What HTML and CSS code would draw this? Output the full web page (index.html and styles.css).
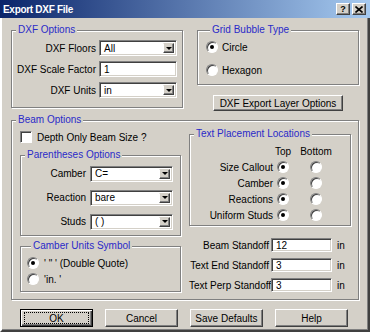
FILE: index.html
```html
<!DOCTYPE html>
<html lang="en">
<head>
<meta charset="UTF-8">
<title>Export DXF File</title>
<link rel="stylesheet" href="styles.css">
</head>
<body>

<div class="dialog">
    <div class="titlebar">
        <span class="title">Export DXF File</span>
        <div class="tb-buttons">
            <span class="tb-btn">?</span>
            <span class="tb-btn"><svg width="8" height="7" viewBox="0 0 8 7"><path d="M0.5 0.5 L7.5 6.5 M7.5 0.5 L0.5 6.5" stroke="#000" stroke-width="1.6"/></svg></span>
        </div>
    </div>

    <div class="client">
        <div class="top-row">
            <fieldset class="group dxf">
                <legend>DXF Options</legend>
                <div class="form-grid">
                    <span class="lbl">DXF Floors</span>
                    <div class="combo"><span class="val">All</span><span class="drop"></span></div>
                    <span class="lbl">DXF Scale Factor</span>
                    <div class="field">1</div>
                    <span class="lbl">DXF Units</span>
                    <div class="combo"><span class="val">in</span><span class="drop"></span></div>
                </div>
            </fieldset>

            <div class="right-top">
                <fieldset class="group bubble">
                    <legend>Grid Bubble Type</legend>
                    <div class="opt"><span class="radio on"></span>Circle</div>
                    <div class="opt"><span class="radio"></span>Hexagon</div>
                </fieldset>
                <button class="btn layer-btn">DXF Export Layer Options</button>
            </div>
        </div>

        <fieldset class="group beam">
            <legend>Beam Options</legend>
            <div class="beam-cols">
                <div class="beam-left">
                    <div class="check-row"><span class="checkbox"></span>Depth Only Beam Size ?</div>

                    <fieldset class="group parens">
                        <legend>Parentheses Options</legend>
                        <div class="parens-grid">
                            <span class="lbl">Camber</span>
                            <div class="combo"><span class="val">C=</span><span class="drop"></span></div>
                            <span class="lbl">Reaction</span>
                            <div class="combo"><span class="val">bare</span><span class="drop"></span></div>
                            <span class="lbl">Studs</span>
                            <div class="combo"><span class="val">( )</span><span class="drop"></span></div>
                        </div>
                    </fieldset>

                    <fieldset class="group units">
                        <legend>Camber Units Symbol</legend>
                        <div class="opt"><span class="radio on"></span>' " ' (Double Quote)</div>
                        <div class="opt"><span class="radio"></span>'in. '</div>
                    </fieldset>
                </div>

                <div class="beam-right">
                    <fieldset class="group placement">
                        <legend>Text Placement Locations</legend>
                        <div class="place-grid">
                            <span></span><span class="hdr">Top</span><span class="hdr">Bottom</span>
                            <span class="lbl">Size Callout</span><span class="cell"><span class="radio on"></span></span><span class="cell"><span class="radio"></span></span>
                            <span class="lbl">Camber</span><span class="cell"><span class="radio on"></span></span><span class="cell"><span class="radio"></span></span>
                            <span class="lbl">Reactions</span><span class="cell"><span class="radio on"></span></span><span class="cell"><span class="radio"></span></span>
                            <span class="lbl">Uniform Studs</span><span class="cell"><span class="radio on"></span></span><span class="cell"><span class="radio"></span></span>
                        </div>
                    </fieldset>

                    <div class="standoffs">
                        <span class="lbl">Beam Standoff</span><div class="field small">12</div><span>in</span>
                        <span class="lbl">Text End Standoff</span><div class="field small">3</div><span>in</span>
                        <span class="lbl">Text Perp Standoff</span><div class="field small">3</div><span>in</span>
                    </div>
                </div>
            </div>
        </fieldset>

        <div class="buttons">
            <button class="btn default"><span class="focus">OK</span></button>
            <button class="btn">Cancel</button>
            <button class="btn">Save Defaults</button>
            <button class="btn">Help</button>
        </div>
    </div>
</div>

</body>
</html>
```

FILE: styles.css
```css
body {
    margin: 0;
    font-family: "Liberation Sans", Arial, sans-serif;
    font-size: 10px;
    color: #000;
}
.dialog {
    width: 370px;
    height: 332px;
    background-color: #d4d0c8;
}
.titlebar {
    height: 18px;
    box-sizing: border-box;
    padding: 0 4px 0 3px;
    display: flex;
    align-items: center;
    justify-content: space-between;
    background: linear-gradient(to right, #0a246a, #a6caf0);
}
.title {
    color: #fff;
    font-weight: bold;
    letter-spacing: -0.3px;
}
.tb-buttons {
    display: flex;
    gap: 2px;
}
.tb-btn {
    width: 14px;
    height: 12px;
    box-sizing: border-box;
    display: flex;
    align-items: center;
    justify-content: center;
    background-color: #d4d0c8;
    border: 1px solid;
    border-color: #fff #404040 #404040 #fff;
    box-shadow: inset -1px -1px #808080;
    font-weight: bold;
    font-size: 9px;
}
.client {
    height: 314px;
    box-sizing: border-box;
    border-style: solid;
    border-width: 0 2px 2px 2px;
    border-color: #d4d0c8 #404040 #404040 #fff;
    box-shadow: inset -1px -1px #808080;
    padding: 6px 9px 0 9px;
}

/* group boxes */
.group {
    margin: 0;
    padding: 0;
    min-width: 0;
    border: 1px solid #808080;
    box-shadow: inset 1px 1px #fff, 1px 1px #fff;
    box-sizing: border-box;
}
.group legend {
    margin-left: 4px;
    padding: 0 2px;
    line-height: 12px;
    color: #2a2ac8;
    background-color: #d4d0c8;
}
.lbl {
    text-align: right;
    white-space: nowrap;
}

/* fields */
.combo, .field {
    box-sizing: border-box;
    background-color: #fff;
    border: 1px solid;
    border-color: #808080 #fff #fff #808080;
    box-shadow: inset 1px 1px #404040, inset -1px -1px #d4d0c8;
    display: flex;
    align-items: center;
}
.combo {
    height: 16px;
    padding: 2px;
}
.combo .val {
    flex: 1;
    padding-left: 2px;
}
.drop {
    width: 11px;
    align-self: stretch;
    box-sizing: border-box;
    background-color: #d4d0c8;
    border: 1px solid;
    border-color: #d4d0c8 #404040 #404040 #fff;
    box-shadow: inset -1px -1px #808080;
    display: flex;
    align-items: center;
    justify-content: center;
}
.drop::after {
    content: "";
    border-left: 3px solid transparent;
    border-right: 3px solid transparent;
    border-top: 3px solid #000;
}
.field {
    height: 16px;
    padding-left: 4px;
}
.field.small {
    height: 14px;
}

.radio, .checkbox {
    flex: none;
    box-sizing: border-box;
    background-color: #fff;
    border: 1px solid;
    border-color: #808080 #fff #fff #808080;
    box-shadow: inset 1px 1px #404040;
}
.radio {
    position: relative;
    width: 12px;
    height: 12px;
    border-radius: 50%;
}
.radio.on::after {
    content: "";
    position: absolute;
    left: 3px;
    top: 3px;
    width: 4px;
    height: 4px;
    border-radius: 50%;
    background-color: #000;
}
.checkbox {
    width: 12px;
    height: 12px;
    margin-right: 5px;
}
.opt {
    display: flex;
    align-items: center;
    height: 16px;
}
.opt .radio {
    margin-right: 4px;
}

/* top row */
.top-row {
    display: flex;
    gap: 14px;
    height: 87px;
}
.dxf {
    width: 172px;
    height: 84px;
}
.form-grid {
    display: grid;
    grid-template-columns: 84px 78px;
    grid-auto-rows: 16px;
    column-gap: 3px;
    row-gap: 5px;
    align-items: center;
    padding: 4px 5px 9px 0;
}
.right-top {
    width: 162px;
}
.bubble {
    height: 61px;
    padding: 3px 0 6px 8px;
}
.bubble .opt + .opt {
    margin-top: 7px;
}
.btn {
    width: 73px;
    height: 18px;
    padding: 0;
    font: inherit;
    color: #000;
    background-color: #d4d0c8;
    border: 1px solid;
    border-color: #fff #404040 #404040 #fff;
    box-shadow: inset -1px -1px #808080;
}
.layer-btn {
    display: block;
    width: 130px;
    height: 16px;
    margin: 10px auto 0;
}

/* beam options */
.beam {
    margin-top: 3px;
    height: 186px;
}
.beam-cols {
    display: grid;
    grid-template-columns: 161px 162px;
    column-gap: 8px;
    padding: 0 7px 0 8px;
}
.check-row {
    display: flex;
    align-items: center;
    height: 14px;
    margin-top: 4px;
}
.parens {
    margin-top: 5px;
    height: 87px;
}
.parens-grid {
    display: grid;
    grid-template-columns: 65px 83px;
    grid-auto-rows: 17px;
    column-gap: 4px;
    row-gap: 7px;
    align-items: center;
    padding: 4px 7px 5px 0;
}
.units {
    margin-top: 4px;
    height: 52px;
    padding: 3px 0 4px 6px;
}
.units .opt .radio {
    margin-right: 5px;
}
.placement {
    margin-top: 2px;
    height: 98px;
}
.place-grid {
    display: grid;
    grid-template-columns: 83px 20px 46px;
    grid-auto-rows: 16px;
    align-items: center;
    padding-top: 3px;
}
.hdr, .cell {
    display: flex;
    justify-content: center;
}
.standoffs {
    display: grid;
    grid-template-columns: 80px 63px auto;
    grid-auto-rows: 14px;
    row-gap: 6px;
    align-items: center;
    margin-top: 12px;
}
.standoffs .field {
    margin-left: 2px;
}
.standoffs .field + span {
    margin-left: 5px;
}

/* bottom buttons */
.buttons {
    display: flex;
    gap: 12px;
    margin: 9px 0 0 9px;
}
.btn.default {
    border-color: #000;
    box-shadow: inset 1px 1px #fff, inset -1px -1px #404040, inset -2px -2px #808080;
    padding: 2px 3px;
}
.focus {
    display: flex;
    align-items: center;
    justify-content: center;
    height: 100%;
    border: 1px dotted #000;
    box-sizing: border-box;
}
```
